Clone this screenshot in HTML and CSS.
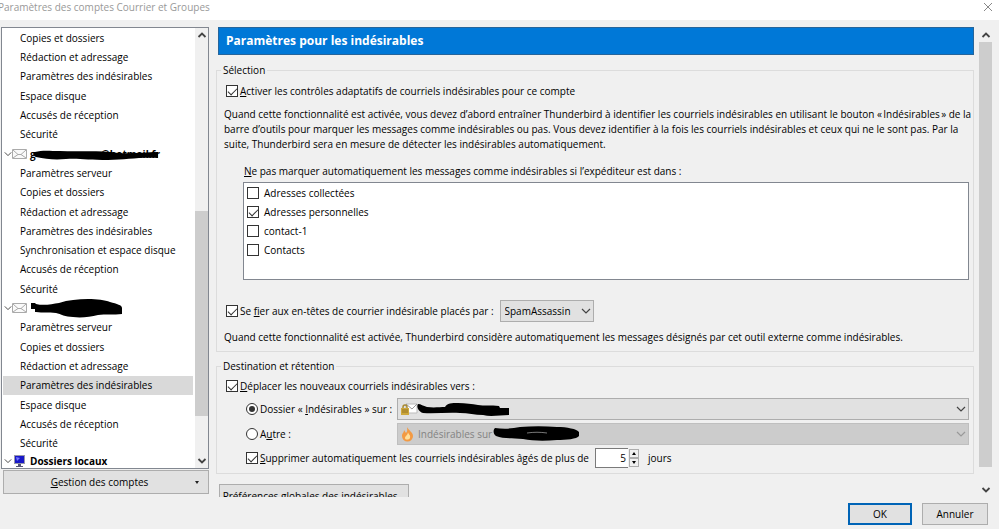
FILE: index.html
```html
<!DOCTYPE html>
<html lang="fr">
<head>
  <meta charset="UTF-8">
  <title>Paramètres des comptes Courrier et Groupes</title>
  <link rel="stylesheet" href="styles.css">
</head>
<body>

  <svg width="0" height="0" class="sprites">
    <symbol id="chevron" viewBox="0 0 10 6"><path d="M1 1l4 4 4-4" fill="none" stroke="currentColor" stroke-width="1.200"/></symbol>
    <symbol id="arrow-up" viewBox="0 0 10 8"><path d="M1.500 6L5 2.500 8.500 6" fill="none" stroke="#444" stroke-width="1.800"/></symbol>
    <symbol id="arrow-down" viewBox="0 0 10 8"><path d="M1.500 2L5 5.500 8.500 2" fill="none" stroke="#444" stroke-width="1.800"/></symbol>
    <symbol id="mail" viewBox="0 0 15 12">
      <path d="M.5 1.500h14v9H.5z" fill="#fafafa" stroke="#aaa"/>
      <path d="M1 2l5 4.500h3L14 2M1 10l5-3.500M14 10L9 6.500" fill="none" stroke="#aaa"/>
    </symbol>
  </svg>

  <header class="titlebar">
    <h1>Paramètres des comptes Courrier et Groupes</h1>
    <button class="close" aria-label="Fermer"><svg width="10" height="11"><path d="M1 2l8 8M9 2L1 10" stroke="#888" fill="none"/></svg></button>
  </header>

  <div class="dialog">
    <aside class="sidebar">
      <div class="tree-box">
        <ul class="tree">
          <li>Copies et dossiers</li>
          <li>Rédaction et adressage</li>
          <li>Paramètres des indésirables</li>
          <li>Espace disque</li>
          <li>Accusés de réception</li>
          <li>Sécurité</li>
          <li class="account">
            <svg class="twisty"><use href="#chevron"/></svg><svg class="icon"><use href="#mail"/></svg>
            <span class="address"><span>g</span><span>@hotmail.fr</span>
              <svg class="scribble" width="132" height="12"><path d="M5 3C12 1 20 2 30 2c20 1 38-1 58 2 16 1 26-1 40-1v6c-20-1-32 2-50 2C58 11 48 9 36 10c-12 1-20 0-30-2-3-1-3-4-1-5z"/></svg>
            </span>
          </li>
          <li>Paramètres serveur</li>
          <li>Copies et dossiers</li>
          <li>Rédaction et adressage</li>
          <li>Paramètres des indésirables</li>
          <li>Synchronisation et espace disque</li>
          <li>Accusés de réception</li>
          <li>Sécurité</li>
          <li class="account">
            <svg class="twisty"><use href="#chevron"/></svg><svg class="icon"><use href="#mail"/></svg>
            <svg width="92" height="20"><path d="M1 5h4l1 1c8 2 16 0 23-1C38 2 48 1 58 1c9 0 17 1 22 3 7 2 12 3 12 6v6c-8 1-17 0-24 1-8 2-17 3-25 2-8 0-12-3-17-4-8-1-13 0-20-1H5v-3H1z"/></svg>
          </li>
          <li>Paramètres serveur</li>
          <li>Copies et dossiers</li>
          <li>Rédaction et adressage</li>
          <li class="selected">Paramètres des indésirables</li>
          <li>Espace disque</li>
          <li>Accusés de réception</li>
          <li>Sécurité</li>
          <li class="account local">
            <svg class="twisty"><use href="#chevron"/></svg><svg class="icon" viewBox="0 0 15 12"><path d="M2 0h11v9H2z" fill="#99a"/><path d="M3 1h9v7H3z" fill="#1818c8"/><path d="M4 2l4 1-3 3z" fill="#77f"/><path d="M6 9h3v2h2v1H4v-1h2z" fill="#557"/></svg>
            Dossiers locaux
          </li>
        </ul>
        <div class="scrollbar">
          <svg><use href="#arrow-up"/></svg>
          <div class="track tree-track"><div class="thumb"></div></div>
          <svg><use href="#arrow-down"/></svg>
        </div>
      </div>
      <button class="manage"><span><u>G</u>estion des comptes</span><i class="caret"></i></button>
    </aside>

    <main class="content">
      <h2>Paramètres pour les indésirables</h2>

      <fieldset>
        <legend>Sélection</legend>
        <div class="row">
          <input type="checkbox" id="adaptive" checked>
          <label for="adaptive"><u>A</u>ctiver les contrôles adaptatifs de courriels indésirables pour ce compte</label>
        </div>
        <p>Quand cette fonctionnalité est activée, vous devez d’abord entraîner Thunderbird à identifier les courriels indésirables en utilisant le bouton «&#8239;Indésirables&#8239;» de la barre d’outils pour marquer les messages comme indésirables ou pas. Vous devez identifier à la fois les courriels indésirables et ceux qui ne le sont pas. Par la suite, Thunderbird sera en mesure de détecter les indésirables automatiquement.</p>
        <div class="whitelist">
          <div id="books"><u>N</u>e pas marquer automatiquement les messages comme indésirables si l’expéditeur est dans :</div>
          <div class="listbox" role="group" aria-labelledby="books">
            <label><input type="checkbox">Adresses collectées</label>
            <label><input type="checkbox" checked>Adresses personnelles</label>
            <label><input type="checkbox">contact-1</label>
            <label><input type="checkbox">Contacts</label>
          </div>
        </div>
        <div class="row trust">
          <input type="checkbox" id="trust" checked>
          <label for="trust">Se <u>f</u>ier aux en-têtes de courrier indésirable placés par :</label>
          <div class="select spam">
            <select aria-label="Outil externe"><option>SpamAssassin</option></select>
            <svg class="arrow"><use href="#chevron"/></svg>
          </div>
        </div>
        <p>Quand cette fonctionnalité est activée, Thunderbird considère automatiquement les messages désignés par cet outil externe comme indésirables.</p>
      </fieldset>

      <fieldset class="destination">
        <legend>Destination et rétention</legend>
        <div class="row move">
          <input type="checkbox" id="move" checked>
          <label for="move"><u>D</u>éplacer les nouveaux courriels indésirables vers :</label>
        </div>
        <div class="targets">
          <div class="option">
            <input type="radio" name="target" id="junk" checked>
            <label for="junk">Dossier « <u>I</u>ndésirables » sur :</label>
          </div>
          <div class="select">
            <select aria-label="Compte"><option></option></select>
            <svg class="folder" width="110" height="20">
              <path d="M5 5h11v9H5z" fill="#fff" stroke="#bbb"/><path d="M5 5l6 5 5-5" fill="none" stroke="#999"/>
              <path d="M2 10V8a2 2 0 0 1 4 0v2" fill="none" stroke="#a98a32" stroke-width="1.500"/><path d="M0 9h8v7H0z" fill="#cda83c"/><path d="M1 11h6M1 13h6" stroke="#947225"/>
              <path d="M17 5c3 0 5 2 9 3 7 1 13 0 18 0 2-4 7-4 13-4 8 0 14 1 20 2 6 1 13 0 21 1l1 2h9v7c-9 0-18 2-26 0-8 0-15-2-23-2-12-1-25 1-37 0-4-1-7-6-5-9z" fill="#000"/>
            </svg>
            <svg class="arrow"><use href="#chevron"/></svg>
          </div>
          <div class="option">
            <input type="radio" name="target" id="other">
            <label for="other">A<u>u</u>tre :</label>
          </div>
          <div class="select off">
            <select aria-label="Dossier" disabled><option>Indésirables sur</option></select>
            <svg class="folder" width="180" height="20">
              <path d="M6 3c1 3 6 5 6 9a5 5 0 0 1-11 0c0-3 2-3 2-6l2 3c2-2 1-4 1-6z" fill="#f39a43"/><path d="M7 8c0 2 3 3 2 6-1 2-5 2-5 0 0-2 3-3 3-6z" fill="#ffdf9b"/>
              <path d="M94 4c8 1 16 1 25-1 12-1 25-1 37 0 10 0 20 2 22 5v4c-2 3-13 4-22 4-12 1-24 1-34-1-11-1-20 0-27-3-3-2-3-6-1-8z" fill="#000"/><path d="M126 9c7-1 13-1 20 0" fill="none" stroke="#777"/>
            </svg>
            <svg class="arrow"><use href="#chevron"/></svg>
          </div>
        </div>
        <div class="row purge">
          <input type="checkbox" id="purge" checked>
          <label for="purge"><u>S</u>upprimer automatiquement les courriels indésirables âgés de plus de</label>
          <input type="number" id="days" value="5" aria-label="Nombre de jours">
          <div class="spinner"><button aria-label="Plus"></button><button aria-label="Moins"></button></div>
          <label for="days">jours</label>
        </div>
      </fieldset>

      <button class="global">Préférences globales des indésirables…</button>
    </main>

    <div class="scrollbar page-scroll">
      <svg><use href="#arrow-up"/></svg>
      <div class="track"><div class="thumb"></div></div>
      <svg><use href="#arrow-down"/></svg>
    </div>
  </div>

  <footer>
    <button class="ok">OK</button>
    <button>Annuler</button>
  </footer>

</body>
</html>
```
FILE: styles.css
```css
* {
  box-sizing: border-box;
}
body {
  margin: 0;
  height: 100vh;
  display: flex;
  flex-direction: column;
  background: #f0f0f0;
  color: #000;
  font: 10px/16px "Open Sans", "Noto Sans", sans-serif;
  overflow: hidden;
}
button, input, select {
  font: inherit;
  color: inherit;
  margin: 0;
  padding: 0;
}
button {
  background: #e1e1e1;
  border: 1px solid #adadad;
}
h1, h2, p, ul {
  margin: 0;
  padding: 0;
}
svg {
  flex: none;
}
.sprites {
  position: absolute;
}

/* title bar */
.titlebar {
  height: 20px;
  flex: none;
  display: flex;
  justify-content: space-between;
  align-items: flex-start;
  background: #fff;
}
.titlebar h1 {
  font-size: 10px;
  line-height: 14px;
  font-weight: normal;
  color: #999;
  text-indent: -2px;
}
.close {
  display: flex;
  background: none;
  border: none;
  padding: 1px 6px;
}

/* main area */
.dialog {
  flex: 1;
  min-height: 0;
  display: flex;
}
.sidebar {
  width: 209px;
  flex: none;
  display: flex;
  flex-direction: column;
  padding: 7px 0 3px 1px;
}
.tree-box {
  flex: 1;
  min-height: 0;
  display: flex;
  background: #fff;
  border: 1px solid #828790;
}
.tree {
  flex: 1;
  display: grid;
  grid-template-rows: repeat(22, minmax(19px, 1fr)) 15px;
  list-style: none;
  padding: 0 2px 0 1px;
  overflow: hidden;
}
.tree li {
  display: flex;
  align-items: center;
  padding-left: 17px;
  white-space: nowrap;
}
.tree li.account {
  padding-left: 1px;
}
.tree li.local {
  font-weight: bold;
  overflow: hidden;
}
.tree .selected {
  background: #d9d9d9;
}
.twisty {
  width: 8px;
  height: 6px;
  color: #444;
}
.icon {
  width: 15px;
  height: 12px;
  margin-right: 3px;
}
.address {
  position: relative;
  width: 130px;
  display: flex;
  justify-content: space-between;
  font-weight: bold;
}
.scribble {
  position: absolute;
  left: 0;
  top: 3px;
}
.manage {
  height: 24px;
  margin: 1px 0 0 2px;
  display: flex;
  align-items: center;
}
.manage span {
  flex: 1;
}
.caret {
  margin-right: 9px;
  border: 2px solid transparent;
  border-top: 3px solid #222;
  border-bottom: 0;
}

/* scrollbars */
.scrollbar {
  width: 13px;
  flex: none;
  display: flex;
  flex-direction: column;
  align-items: center;
  background: #f0f0f0;
}
.scrollbar svg {
  width: 10px;
  height: 8px;
  margin: 3px 0;
}
.track {
  flex: 1;
  width: 100%;
}
.thumb {
  height: 100%;
  background: #cdcdcd;
}
.tree-track {
  padding: 169px 0 38px;
}
.page-scroll {
  margin: 8px 7px 0 5px;
}
.page-scroll .track {
  padding-bottom: 16px;
}

/* settings */
.content {
  flex: 1;
  min-width: 0;
  margin-left: 7px;
  padding-top: 7px;
  overflow: hidden;
}
.content h2 {
  margin-left: 2px;
  padding-left: 7px;
  background: #0078d7;
  border: 1px solid #26659b;
  color: #fff;
  font-size: 12px;
  line-height: 26px;
}
fieldset {
  min-width: 0;
  margin: 7px 0 0;
  padding: 0 4px 6px;
  border: 1px solid #dcdcdc;
}
legend {
  padding: 0 2px;
}
fieldset p {
  margin: 8px -3px 0 3px;
  line-height: 15px;
}
.row, .option {
  display: flex;
  align-items: center;
}
.row {
  margin: 5px 0 0 5px;
}
.row > input[type=checkbox], .option input {
  margin-right: 2px;
}
input[type=checkbox], input[type=radio] {
  appearance: none;
  flex: none;
  width: 12px;
  height: 12px;
  background: #fff;
  border: 1px solid #333;
}
input[type=radio] {
  border-radius: 50%;
}
input[type=checkbox]:checked::after {
  content: "";
  display: block;
  width: 8px;
  height: 4px;
  margin: 2px 1px;
  border: solid #333;
  border-width: 0 0 1px 1px;
  transform: rotate(-45deg);
}
input[type=radio]:checked::after {
  content: "";
  display: block;
  width: 6px;
  height: 6px;
  margin: 2px;
  border-radius: 50%;
  background: #333;
}
.whitelist {
  margin: 11px 0 0 22px;
}
#books {
  padding-left: 1px;
}
.listbox {
  height: 98px;
  margin-top: 3px;
  display: grid;
  grid-template-rows: repeat(5, 1fr);
  background: #fff;
  border: 1px solid #828790;
}
.listbox label {
  display: flex;
  align-items: center;
  gap: 5px;
  padding-left: 3px;
}
.trust {
  margin-top: 20px;
}
.select {
  position: relative;
}
.select select {
  appearance: none;
  display: block;
  width: 100%;
  height: 22px;
  padding: 0 4px;
  background: #e1e1e1;
  border: 1px solid #adadad;
  border-radius: 0;
}
.spam {
  width: 94px;
  margin-left: 6px;
}
.arrow {
  position: absolute;
  right: 3px;
  top: 8px;
  width: 10px;
  height: 6px;
  color: #444;
  pointer-events: none;
}
.folder {
  position: absolute;
  left: 4px;
  top: 1px;
  pointer-events: none;
}
.off select {
  padding-left: 20px;
  background: #ccc;
  border-color: #bfbfbf;
  color: #838383;
  opacity: 1;
}
.off .arrow {
  color: #999;
}
.destination {
  margin-top: 6px;
  padding-bottom: 5px;
}
.move {
  margin-top: 4px;
}
.targets {
  display: grid;
  grid-template-columns: 151px 1fr;
  gap: 3px 0;
  margin: 4px 0 0 25px;
}
.purge {
  margin: 3px 0 0 25px;
}
#days {
  appearance: textfield;
  width: 33px;
  height: 20px;
  margin-left: 6px;
  padding-right: 2px;
  background: #fff;
  border: 1px solid #7a7a7a;
  border-right: 0;
  text-align: right;
}
#days::-webkit-inner-spin-button {
  display: none;
}
.spinner {
  display: grid;
  margin: 0 9px 0 1px;
}
.spinner button {
  width: 10px;
  height: 9px;
  display: flex;
  align-items: center;
  justify-content: center;
  background: #f0f0f0;
}
.spinner button::after {
  content: "";
  border: 2px solid transparent;
  border-top: 0;
  border-bottom: 3px solid #000;
}
.spinner button:last-child::after {
  transform: rotate(180deg);
}
.global {
  height: 24px;
  width: 190px;
  margin: 10px 0 0 3px;
}

/* bottom buttons */
footer {
  flex: none;
  display: flex;
  justify-content: flex-end;
  gap: 10px;
  padding: 6px 11px 4px;
}
footer button {
  width: 66px;
  height: 22px;
}
footer .ok {
  width: 64px;
  border: 2px solid #0064b6;
}
```
